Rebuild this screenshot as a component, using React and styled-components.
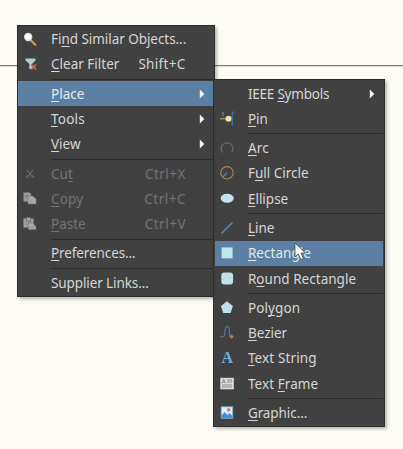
import React from 'react';
import styled, { createGlobalStyle } from 'styled-components';

const GlobalStyle = createGlobalStyle`
  body { margin: 0; overflow: hidden; background: #fdfcf4; }
  * { box-sizing: border-box; }
`;

const Canvas = styled.main`
  position: relative;
  width: 403px;
  height: 449px;
  overflow: hidden;
  background: #fdfcf4;
  font-family: "Noto Sans", "Noto Sans CJK SC", sans-serif;
  font-size: 13.5px;
`;

const Wire = styled.div`
  position: absolute;
  top: 65px;
  left: 0;
  width: 100%;
  height: 1px;
  background: #7d7d78;
  box-shadow: 0 1px 0 #dddcd5;
`;

const Menu = styled.div`
  position: absolute;
  left: ${p => p.$x}px;
  top: ${p => p.$y}px;
  width: ${p => p.$w}px;
  height: ${p => p.$h}px;
  padding: 1px 1px 0 0.5px;
  background: #414141;
  border: 1px solid #2c2c2c;
  box-shadow: 2px 2px 3px rgba(0, 0, 0, 0.28);
`;

const Row = styled.div`
  display: flex;
  align-items: center;
  height: 25.2px;
  padding-right: 8px;
  color: ${p => (p.$disabled ? '#737373' : p.$active ? '#e2e8ec' : '#d6d6d6')};
  background: ${p => (p.$active ? '#5b80a4' : 'transparent')};
`;

const IconSlot = styled.span`
  display: flex;
  flex: none;
  width: 33px;
  padding-left: 5px;
  svg { display: block; overflow: visible; }
`;

const Label = styled.span`
  flex: 1;
  white-space: pre;
  line-height: 20px;
  letter-spacing: ${p => p.$ls || 0}px;
`;

const Mnemonic = styled.span`
  text-decoration: underline;
  text-decoration-thickness: 1px;
  text-underline-offset: 2px;
  text-decoration-skip-ink: none;
`;

const Shortcut = styled.span`
  margin-right: ${p => (p.$wide ? 18.5 : 19)}px;
  white-space: pre;
  letter-spacing: ${p => (p.$wide ? 0.5 : 0.3)}px;
`;

const Separator = styled.div`
  height: 4.3px;
  margin-left: 33px;
  padding-top: 2px;
  &::after { content: ''; display: block; height: 1px; background: #2b2b2b; }
`;

const Pointer = styled.svg`
  position: absolute;
  left: 293px;
  top: 242px;
`;

const Arrow = () => (
  <svg width="6" height="10" viewBox="0 0 6 10"><path d="M.8.5 5.4 5 .8 9.5Z" fill="#f2f2f2" /></svg>
);

const drawings = {
  find: <><path d="m8 8.5 4.3 4.2" stroke="#c99a4c" strokeWidth="2.3" strokeLinecap="round" /><circle cx="5.2" cy="5" r="4.2" fill="#dce3f3" /><circle cx="5" cy="4.6" r="2.9" fill="#fff" /></>,
  filter: <><path d="M2.5 1.5h10v2L9.2 6.8V12H6.3V6.800L2.500 3.500Z" fill="#a9cfd2" /><path d="m8 7.500 5 5m0-5-5 5" stroke="#d7636b" strokeWidth="1.700" /></>,
  cut: <g fill="none" stroke="#707070" strokeWidth="1"><path d="M4 2.500 7 7.500 10 2.500M7 7.500 5 9M7 7.500 9 9" /><circle cx="4.200" cy="9.700" r=".9" /><circle cx="9.800" cy="9.700" r=".9" /></g>,
  copy: <><path d="M.5.500h6l1.500 1.500v7.500H.5Z" fill="#999" /><path d="M5 4h4.500l3.500 3V12H5Z" fill="#adadad" stroke="#777" strokeWidth=".6" /><path d="M2 3.500h3M2 5.500h2" stroke="#777" /><path d="M7 8h3m-3 2h4" stroke="#999" /></>,
  paste: <><path d="M.5 1.500h3V.5h4v1h3v9H.5Z" fill="#a0a0a0" /><path d="M3.500 2v2.500h4V2M2.500 7h2" stroke="#777" fill="none" /><path d="M5.500 6h4l3.500 3.500V12.500H5.500Z" fill="#aaa" stroke="#777" strokeWidth=".7" /><path d="M7.500 10h3.500" stroke="#8d8d8d" /></>,
  pin: <><path d="M0 6.800h8" stroke="#ad9b58" strokeWidth="1.200" /><path d="m2 1 1-.6v4" stroke="#999" fill="none" strokeWidth=".8" /><path d="M14 .3h-1.800v12.500H13" stroke="#416fa3" fill="none" strokeWidth="1.500" /><circle cx="8.500" cy="6.800" r="3" fill="#ede2a8" /></>,
  arc: <path d="M2.500 11.500A5.900 5.900 0 1 1 11.500 11.500" fill="none" stroke="#6b7075" strokeWidth="1.200" />,
  circle: <><circle cx="7" cy="6.800" r="6.200" fill="none" stroke="#a98451" strokeWidth="1.200" /><path d="m3.200 10.600 4-4" stroke="#6284b2" strokeWidth="1.300" /></>,
  ellipse: <ellipse cx="7.200" cy="6.300" rx="6.500" ry="4.500" fill="#c4e5ef" />,
  line: <path d="M1.500 12.500 12.500 1.500" stroke="#5c87bd" strokeWidth="1.600" />,
  rect: <rect x="1.600" y="1.400" width="11" height="11" fill="#bfe4ef" />,
  round: <rect x="1.300" y=".6" width="11.800" height="11.800" rx="3" fill="#bfe1e7" />,
  polygon: <path d="m6.900.3 5.900 4.600-2.200 7.100H3.200L1 4.900Z" fill="#bee2ec" />,
  bezier: <><path d="M.5 10.500C3.500 11.500 4.800 10 4.800 6.500S5.300.7 7.200.7 9.500 3 9.500 6v4.500" fill="none" stroke="#5b7798" strokeWidth="1.200" /><path d="m11.600 8.300 2.200 2.300-2.200 2.300-2.200-2.300Z" fill="#b17c3d" /></>,
  text: <text x="7.200" y="12" textAnchor="middle" fontFamily="Liberation Serif, serif" fontWeight="bold" fontSize="16" fill="#71ade2">A</text>,
  frame: <><path d="M.3.800h13.500v11.500H.3Z" fill="#dddce3" /><path d="m2 6.300 1.700-4L5.400 6.300M2.600 5h2.200M7 3h5M7 5h5M2 8h10M2 10h10" stroke="#77757e" strokeWidth=".8" fill="none" /></>,
  graphic: <><path d="M1.200.8h11.500v11.500H1.200Z" fill="#e0f0fc" stroke="#74a9d9" strokeWidth=".8" /><path d="m1.500 9.500 3-3.500 3 3 2-2 3 3v2h-11Z" fill="#4b8dcc" /><circle cx="8.700" cy="3.800" r="1.900" fill="#da8066" /></>,
};

const Icon = ({ name }) => <svg width="14" height="14" viewBox="0 0 14 14">{drawings[name]}</svg>;

const leftItems = [
  { text: 'Fi&nd Similar Objects...', icon: 'find', ls: -0.05 },
  { text: '&Clear Filter', icon: 'filter', shortcut: 'Shift+C' }, null,
  { text: '&Place', arrow: true, active: true },
  { text: '&Tools', arrow: true, ls: 0.2 }, { text: '&View', arrow: true }, null,
  { text: 'Cu&t', icon: 'cut', shortcut: 'Ctrl+X', disabled: true },
  { text: '&Copy', icon: 'copy', shortcut: 'Ctrl+C', disabled: true, ls: 0.2 },
  { text: '&Paste', icon: 'paste', shortcut: 'Ctrl+V', disabled: true }, null,
  { text: '&Preferences...', ls: -0.1 }, null, { text: 'Supplier Links...', ls: -0.1 },
];

const rightItems = [
  { text: 'IEEE &Symbols', arrow: true, ls: -0.22 }, { text: '&Pin', icon: 'pin' }, null,
  { text: '&Arc', icon: 'arc', ls: 0.2 }, { text: 'F&ull Circle', icon: 'circle' }, { text: '&Ellipse', icon: 'ellipse' }, null,
  { text: '&Line', icon: 'line' }, { text: '&Rectangle', icon: 'rect', active: true, ls: 0.05 }, { text: 'R&ound Rectangle', icon: 'round', ls: 0.03 }, null,
  { text: 'Pol&ygon', icon: 'polygon', ls: 0.1 }, { text: '&Bezier', icon: 'bezier' }, { text: '&Text String', icon: 'text', ls: 0.12 }, { text: 'Text &Frame', icon: 'frame', ls: 0.07 }, null,
  { text: '&Graphic...', icon: 'graphic', ls: -0.08 },
];

function Caption({ text }) {
  const i = text.indexOf('&');
  if (i < 0) return text;
  return <>{text.slice(0, i)}<Mnemonic>{text[i + 1]}</Mnemonic>{text.slice(i + 2)}</>;
}

const MenuItems = ({ items }) => items.map((item, i) => item ? (
  <Row key={i} $active={item.active} $disabled={item.disabled}>
    <IconSlot>{item.icon && <Icon name={item.icon} />}</IconSlot>
    <Label $ls={item.ls}><Caption text={item.text} /></Label>
    {item.shortcut && <Shortcut $wide={item.disabled}>{item.shortcut}</Shortcut>}
    {item.arrow && <Arrow />}
  </Row>
) : <Separator key={i} />);

export default function App() {
  return (
    <>
      <GlobalStyle />
      <Canvas>
        <Wire />
        <Menu $x={16.5} $y={24.5} $w={198} $h={272}><MenuItems items={leftItems} /></Menu>
        <Menu $x={213.4} $y={79} $w={171.6} $h={348}><MenuItems items={rightItems} /></Menu>
        <Pointer width="15" height="20" viewBox="0 0 15 20">
          <path d="M2 1v14l3.300-3.100 2.500 5.700 2.700-1.200-2.500-5.300h4.500Z" fill="#fff" stroke="#39434e" strokeWidth=".8" />
        </Pointer>
      </Canvas>
    </>
  );
}
